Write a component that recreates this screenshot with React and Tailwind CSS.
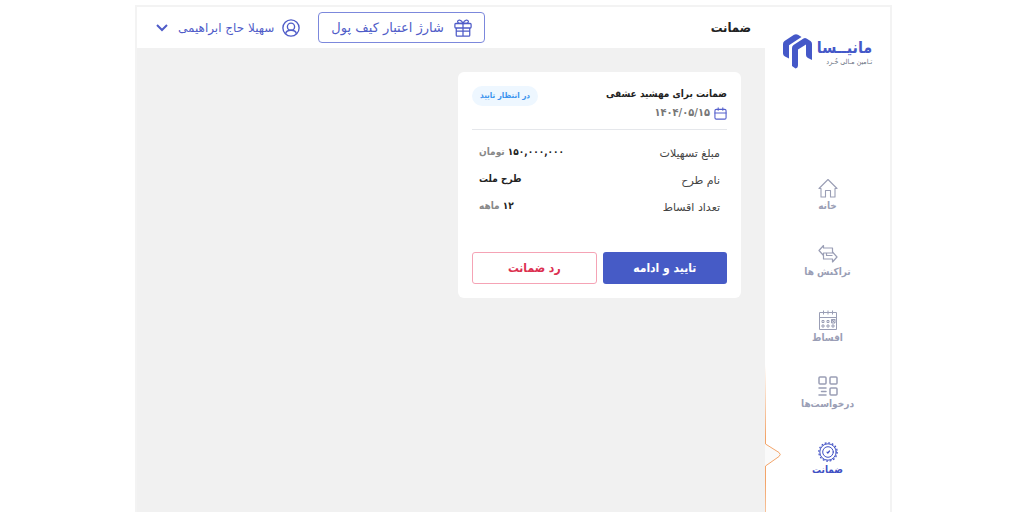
import React from 'react';

const HomeIcon = () => (
  <svg viewBox="0 0 20 20" className="h-5 w-5" fill="none" stroke="currentColor" strokeWidth="1.100" strokeLinejoin="round" strokeLinecap="round">
    <path d="M1 10.500 10 1.500l9 9" />
    <path d="M1.500 10.500h1.500V19h4.500v-6.500h5V19H17v-8.500h1.500" />
  </svg>
);

const TransferIcon = () => (
  <svg viewBox="0 0 20 20" className="h-5 w-5" fill="none" stroke="currentColor" strokeWidth="1.200" strokeLinejoin="round">
    <path d="M5.500 1.500 1 6.500l4.500 5V9h9V4h-9z" />
    <path d="M5.500 11.500V15h9v3l4.500-5-4.500-5" />
    <path d="M8.500 9v2.500h6" />
  </svg>
);

const CalendarGridIcon = () => (
  <svg viewBox="0 0 20 20" className="h-5 w-5" fill="none" stroke="currentColor" strokeWidth="1">
    <path d="M1.500 2.500h17v17h-17zM1.500 7.500h17M5.500 .5v4M10 .5v4M14.500 .5v4" />
    <path d="M4 10.500h2v2H4zM9 10.500h2v2H9zM4 15h2v2H4zM9 15h2v2H9zM14 15h2v2h-2z" />
    <path d="M13.500 9.500h3.500v3.500h-3.500zM13.500 9.500l3.500 3.500M17 9.500 13.500 13" />
  </svg>
);

const RequestsIcon = () => (
  <svg viewBox="0 0 20 20" className="h-5 w-5" fill="none" stroke="currentColor" strokeWidth="1.500" strokeLinecap="round">
    <rect x="1" y="1" width="7" height="7" rx="1" />
    <rect x="12" y="1" width="7" height="7" rx="1" />
    <rect x="12" y="12" width="7" height="7" rx="1" />
    <path d="M1 12h7M3.500 15.500H8M1 19h7" />
  </svg>
);

const SealIcon = () => (
  <svg viewBox="0 0 20 20" className="h-5 w-5" fill="none" stroke="currentColor" strokeWidth="1.200" strokeLinecap="round" strokeLinejoin="round">
    <circle cx="10" cy="10" r="8.200" strokeWidth="1" />
    <circle cx="10" cy="10" r="9.200" strokeWidth="1.200" strokeDasharray="1.800 1.812" strokeLinecap="butt" />
    <circle cx="10" cy="10" r="5.300" strokeWidth="1" />
    <path d="m9 10.200 .8 .8 1.700-2" />
  </svg>
);

const UserIcon = () => (
  <svg viewBox="0 0 20 20" className="h-[18px] w-[18px]" fill="none" stroke="currentColor" strokeWidth="1.500">
    <circle cx="10" cy="10" r="9" />
    <circle cx="10" cy="8.500" r="4" />
    <path d="M4 16.500c.5-3 2.500-4 6-4s5.500 1 6 4" />
  </svg>
);

const GiftIcon = () => (
  <svg viewBox="0 0 20 20" className="h-[18px] w-[18px]" fill="none" stroke="currentColor" strokeWidth="1.400" strokeLinejoin="round">
    <rect x="1" y="5" width="18" height="5" rx="1" />
    <path d="M2.500 10v8a1 1 0 0 0 1 1h13a1 1 0 0 0 1-1v-8M10 5v14M2.500 13.500h15" />
    <path d="M10 5C8 5 4 5 4 3c0-2.500 4.500-2.500 6 2zM10 5c2 0 6 0 6-2 0-2.500-4.500-2.500-6 2z" />
  </svg>
);

const CalendarIcon = () => (
  <svg viewBox="0 0 14 14" className="h-[13px] w-[13px]" fill="none" stroke="#5560cc" strokeWidth="1.200" strokeLinecap="round">
    <rect x="1" y="2.500" width="12" height="10.500" rx="1.500" />
    <path d="M1 6.500h12M4.500 1v2.500M9.500 1v2.500" />
  </svg>
);

const Logo = () => (
  <a href="#" className="flex items-center justify-center gap-1 text-[#4558c8]">
    <span className="flex flex-col items-start">
      <span className="text-[16px] leading-5 font-bold">مانیــسا</span>
      <span className="text-[7px] leading-2 text-gray-500">تـامین مـالی خُـرد</span>
    </span>
    <svg viewBox="0 0 30 36" className="h-9 w-[30px]" fill="currentColor">
      <path d="M0 10Q0 8 1.500 7L11 .8Q13-.3 15 .8L18.500 3 6 11.200V24.500L2 22.500Q0 21.500 0 19.500z" />
      <path d="M9 14q0-2 1.500-3l10-6.500q1.500-1 3 0L27.500 7Q29 8 29 10v16l-4-2q-2-1-2-3V10.500l-8 5V31q0 3-2.500 3.500L9 32z" />
    </svg>
  </a>
);

const menuItems = [
  { label: 'خانه', icon: HomeIcon },
  { label: 'تراکنش ها', icon: TransferIcon },
  { label: 'اقساط', icon: CalendarGridIcon },
  { label: 'درخواست‌ها', icon: RequestsIcon },
  { label: 'ضمانت', icon: SealIcon, active: true },
];

const details = [
  { label: 'مبلغ تسهیلات', value: '۱۵۰,۰۰۰,۰۰۰', unit: 'تومان' },
  { label: 'نام طرح', value: 'طرح ملت' },
  { label: 'تعداد اقساط', value: '۱۲', unit: 'ماهه' },
];

const Sidebar = () => (
  <aside className="relative w-[125px] shrink-0 overflow-hidden bg-white pt-[27px]">
    <Logo />
    <nav className="mt-[108px] flex flex-col gap-[30px]">
      {menuItems.map(({ label, icon: Icon, active }) => (
        <a
          key={label}
          href="#"
          className={`flex flex-col items-center text-[10px] leading-4 font-bold ${active ? 'text-[#4050c4]' : 'text-[#9a9eb5]'}`}
        >
          <Icon />
          {label}
        </a>
      ))}
    </nav>
    {/* Pointer next to the active item */}
    <svg viewBox="0 0 18 180" className="absolute top-[358px] left-0 h-[180px] w-[18px]" fill="none">
      <defs>
        <linearGradient id="edge" x1="0" y1="0" x2="0" y2="180" gradientUnits="userSpaceOnUse">
          <stop offset="0" stopColor="#f3a469" stopOpacity="0" />
          <stop offset="0.400" stopColor="#f3a469" />
          <stop offset="0.650" stopColor="#f3a469" />
          <stop offset="1" stopColor="#f3a469" stopOpacity="0.300" />
        </linearGradient>
      </defs>
      <path d="M0 79 14 87.500q2.500 2 0 4L0 101z" fill="#fafafa" />
      <path d="M.5 0v79L14 87.500q2.500 2 0 4L.5 101v79" stroke="url(#edge)" />
    </svg>
  </aside>
);

const Header = () => (
  <header className="flex h-[41px] items-center justify-between bg-white pr-[14px] pl-[19px] text-[#4f5cc8]">
    <h1 className="text-[13px] font-bold text-[#222]">ضمانت</h1>
    <div className="flex items-center gap-[18px]">
      <button className="flex h-[31px] items-center gap-[10px] rounded border border-[#7c88dc] px-3 font-['DejaVu_Sans',sans-serif] text-[13px]">
        <GiftIcon />
        شارژ اعتبار کیف پول
      </button>
      <button className="flex items-center gap-2 font-['DejaVu_Sans',sans-serif] text-[12px]">
        <UserIcon />
        سهیلا حاج ابراهیمی
        <svg viewBox="0 0 12 8" className="mr-0.5 h-2 w-3" fill="none" stroke="currentColor" strokeWidth="2">
          <path d="m1 1 5 5 5-5" />
        </svg>
      </button>
    </div>
  </header>
);

const GuaranteeCard = () => (
  <section className="w-[283px] rounded-md bg-white p-[14px]">
    <div className="flex items-start justify-between border-b border-gray-200 pb-2">
      <div>
        <h2 className="text-[10px] leading-4 font-bold text-[#222]">ضمانت برای مهشید عشقی</h2>
        <p className="mt-[3px] flex items-center gap-1 text-[11px] leading-4 font-bold text-[#777]">
          <CalendarIcon />
          ۱۴۰۴/۰۵/۱۵
        </p>
      </div>
      <span className="rounded-full bg-[#eef7ff] px-2 text-[8px] leading-5 font-bold text-[#3b93ee]">در انتظار تایید</span>
    </div>
    <dl className="flex flex-col gap-[11px] px-[7px] pt-4">
      {details.map((item) => (
        <div key={item.label} className="flex items-start justify-between">
          <dt className="font-['DejaVu_Sans',sans-serif] text-[11px] leading-4 text-[#444]">{item.label}</dt>
          <dd className="text-[10px] leading-3 font-bold text-[#222]">
            {item.value} {item.unit && <span className="text-[#888]">{item.unit}</span>}
          </dd>
        </div>
      ))}
    </dl>
    <div className="mt-9 grid grid-cols-2 gap-[6px] text-[12px] font-bold">
      <button className="h-8 rounded-[3px] bg-[#465bc6] text-white">تایید و ادامه</button>
      <button className="h-8 rounded-[3px] border border-[#f5a3b5] text-[#dc3050]">رد ضمانت</button>
    </div>
  </section>
);

const App = () => {
  return (
    <div className="min-h-screen bg-white pt-[5px] pr-[132px] pl-[135px] font-['DejaVu_Sans_Condensed','DejaVu_Sans',sans-serif]" dir="rtl">
      <div className="flex min-h-[calc(100vh-5px)] border-2 border-b-0 border-[#f3f3f3]">
        <Sidebar />
        <div className="flex-1 bg-[#f1f1f1]">
          <Header />
          <main className="px-6 pt-6">
            <GuaranteeCard />
          </main>
        </div>
      </div>
    </div>
  );
};

export default App;
